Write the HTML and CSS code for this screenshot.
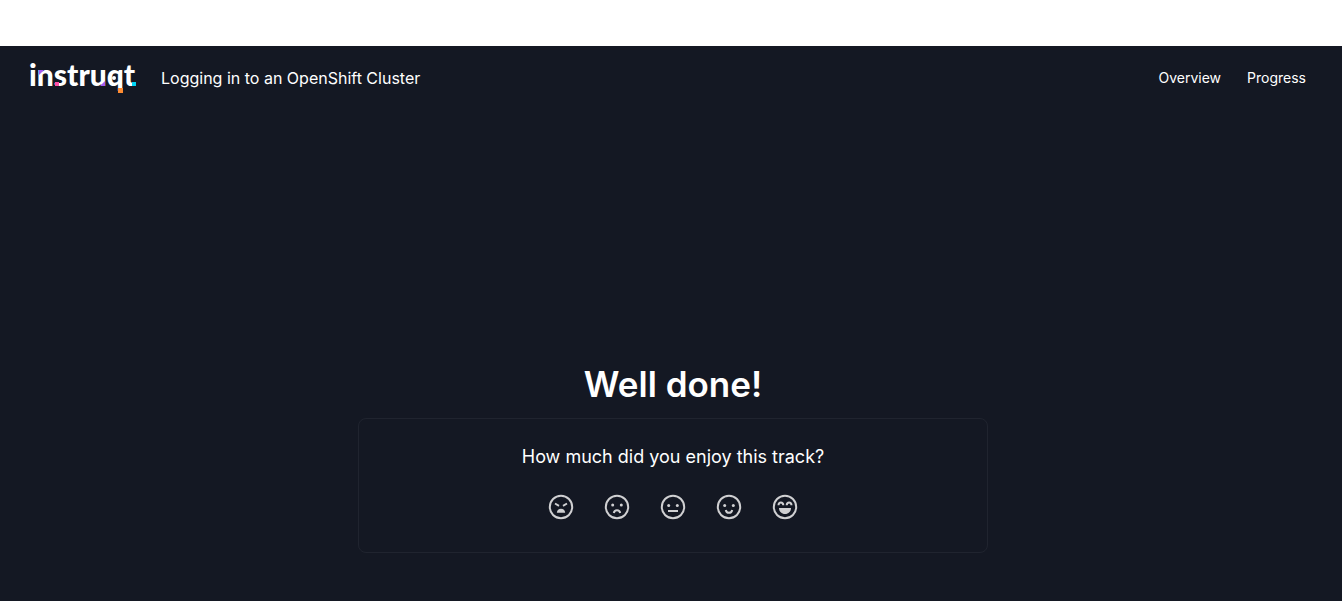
FILE: index.html
```html
<!DOCTYPE html>
<html lang="en">
<head>
<meta charset="utf-8">
<meta name="viewport" content="width=device-width, initial-scale=1">
<title>Logging in to an OpenShift Cluster</title>
<link rel="stylesheet" href="styles.css">
</head>
<body>
<div class="app">
  <header class="topbar">
    <a class="brand" href="#" aria-label="instruqt">
      <svg class="logo" width="112" height="40" viewBox="-2 -4 112 40">
        <text class="wordmark" x="-1" y="24">instruqt</text>
        <path fill="#a45cf0" d="M9 8h5l-5 5z"/>
        <path fill="#ff4fa3" d="M25 20h4v4h-4z"/>
        <path fill="#a45cf0" d="M75 19v5h-5z"/>
        <circle cx="84" cy="16" r="2" fill="#fff"/>
        <path fill="#ff8c32" d="M88 26h5v5h-5z"/>
        <path fill="#00d5f5" d="M102 20h4v4h-4z"/>
      </svg>
    </a>
    <span class="track">Logging in to an OpenShift Cluster</span>
    <nav class="links">
      <a href="#">Overview</a>
      <a href="#">Progress</a>
    </nav>
  </header>
  <main class="content">
    <h1 class="title">Well done!</h1>
    <section class="card">
      <h2 class="question">How much did you enjoy this track?</h2>
      <div class="faces">
        <button class="face" type="button" aria-label="Very bad">
          <svg viewBox="0 0 26 26"><circle class="line" cx="13" cy="13" r="11.200"/><path class="line" d="M7 9.500l4 2.300M19 9.500l-4 2.300"/><path class="solid" d="M8.800 18.800c.3-2.600 1.800-4 4.200-4s3.900 1.400 4.200 4z"/></svg>
        </button>
        <button class="face" type="button" aria-label="Bad">
          <svg viewBox="0 0 26 26"><circle class="line" cx="13" cy="13" r="11.200"/><circle class="solid" cx="8.700" cy="11" r="1.500"/><circle class="solid" cx="17.300" cy="11" r="1.500"/><path class="line" d="M9.800 19c.3-1.800 1.500-2.800 3.200-2.800s2.900 1 3.200 2.800"/></svg>
        </button>
        <button class="face" type="button" aria-label="Neutral">
          <svg viewBox="0 0 26 26"><circle class="line" cx="13" cy="13" r="11.200"/><circle class="solid" cx="8.700" cy="11.500" r="1.500"/><circle class="solid" cx="17.300" cy="11.500" r="1.500"/><path class="line" d="M8 17h10"/></svg>
        </button>
        <button class="face" type="button" aria-label="Good">
          <svg viewBox="0 0 26 26"><circle class="line" cx="13" cy="13" r="11.200"/><circle class="solid" cx="8.700" cy="11.500" r="1.500"/><circle class="solid" cx="17.300" cy="11.500" r="1.500"/><path class="line" d="M9.800 16c.3 1.800 1.500 2.800 3.200 2.800s2.900-1 3.200-2.800"/></svg>
        </button>
        <button class="face" type="button" aria-label="Very good">
          <svg viewBox="0 0 26 26"><circle class="line" cx="13" cy="13" r="11.200"/><path class="line" d="M6.500 11.300c.2-3.600 4.600-3.600 4.800 0M14.700 11.300c.2-3.600 4.600-3.600 4.800 0"/><path class="solid" d="M7 14h12c0 3.600-2.600 6-6 6s-6-2.400-6-6z"/></svg>
        </button>
      </div>
    </section>
  </main>
</div>
</body>
</html>
```
FILE: styles.css
```css
* {
  box-sizing: border-box;
}

body {
  margin: 0;
  padding-top: 46px;
  min-height: 100vh;
  display: flex;
  flex-direction: column;
  background: #fff;
  color: #fff;
  font-family: Inter, "Liberation Sans", sans-serif;
}

.app {
  flex: 1;
  display: flex;
  flex-direction: column;
  background: #141823;
}

.topbar {
  display: flex;
  align-items: center;
  height: 64px;
  padding: 0 36px 0 28px;
}

.brand,
.logo {
  display: block;
}

.logo {
  overflow: visible;
}

.wordmark {
  fill: #fff;
  font-family: Lato, sans-serif;
  font-size: 30px;
  font-weight: 900;
}

.track {
  margin-left: 21px;
  font-size: 16px;
  line-height: 24px;
}

.links {
  display: flex;
  gap: 26px;
  margin-left: auto;
  font-size: 14px;
  line-height: 20px;
}

.links a {
  color: inherit;
  text-decoration: none;
}

.content {
  flex: 1;
  display: flex;
  flex-direction: column;
  align-items: center;
  justify-content: flex-end;
  padding: 0 16px 48px 20px;
}

.title {
  margin: 0 0 10px;
  font-size: 35px;
  line-height: 48px;
  font-weight: 600;
}

.card {
  width: 100%;
  max-width: 630px;
  padding: 24px;
  border: 1px solid #20242f;
  border-radius: 8px;
  text-align: center;
}

.question {
  margin: 0 0 23px;
  font-size: 18px;
  line-height: 28px;
  font-weight: 400;
}

.faces {
  display: flex;
  justify-content: center;
  gap: 30px;
  padding-bottom: 8px;
}

.face {
  width: 26px;
  height: 26px;
  padding: 0;
  border: 0;
  background: none;
  color: #d0d0d2;
  cursor: pointer;
}

.face svg {
  display: block;
}

.line {
  fill: none;
  stroke: currentColor;
  stroke-width: 2;
}

.solid {
  fill: currentColor;
}
```
